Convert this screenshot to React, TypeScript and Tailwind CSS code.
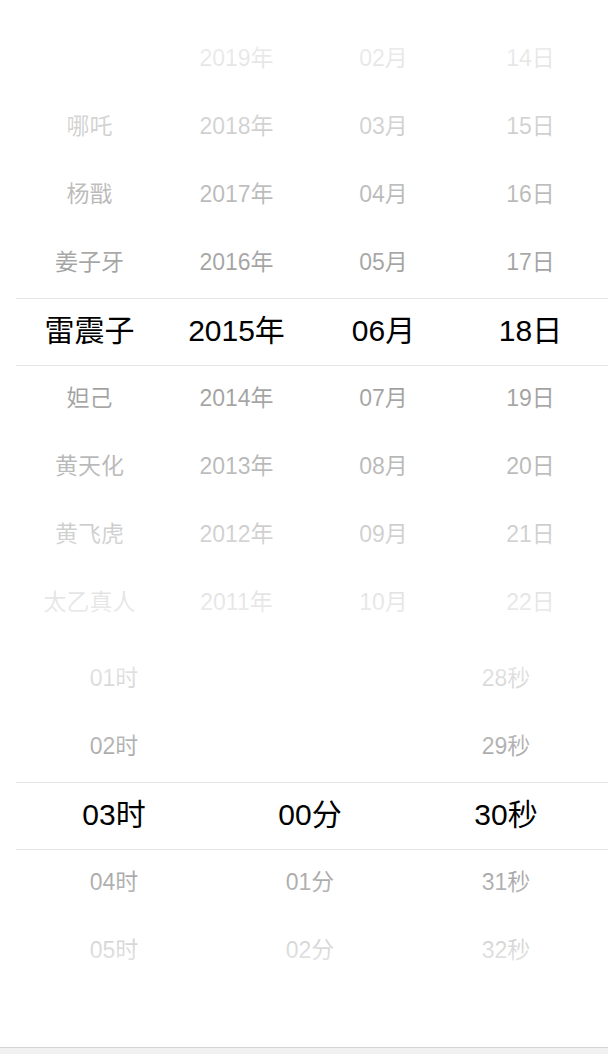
const ROW = 68

const names = ["哪吒", "杨戬", "姜子牙", "雷震子", "妲己", "黄天化", "黄飞虎", "太乙真人", "土行孙"]
const years = Array.from({ length: 30 }, (_, i) => `${2030 - i}年`)
const months = Array.from({ length: 12 }, (_, i) => `${String(i + 1).padStart(2, "0")}月`)
const days = Array.from({ length: 31 }, (_, i) => `${String(i + 1).padStart(2, "0")}日`)
const hours = Array.from({ length: 24 }, (_, i) => `${String(i).padStart(2, "0")}时`)
const minutes = Array.from({ length: 60 }, (_, i) => `${String(i).padStart(2, "0")}分`)
const seconds = Array.from({ length: 60 }, (_, i) => `${String(i).padStart(2, "0")}秒`)

function PickerColumn({
  items,
  value,
  above,
  below,
}: {
  items: string[]
  value: number
  above: number
  below: number
}) {
  const rows = []
  for (let k = -above; k <= below; k++) {
    const item = items[value + k]
    rows.push(
      <div
        key={k}
        className={`flex h-[68px] items-center justify-center whitespace-nowrap pb-1 text-black ${
          k === 0 ? "text-[30px]" : "text-[23px]"
        }`}
      >
        {item ?? ""}
      </div>
    )
  }
  return <div className="flex flex-col">{rows}</div>
}

function PickerView({
  columns,
  above,
  below,
}: {
  columns: { items: string[]; value: number }[]
  above: number
  below: number
}) {
  return (
    <div className="relative ml-4">
      <div
        className="grid pr-1"
        style={{ gridTemplateColumns: `repeat(${columns.length}, minmax(0, 1fr))` }}
      >
        {columns.map((c, i) => (
          <PickerColumn key={i} items={c.items} value={c.value} above={above} below={below} />
        ))}
      </div>
      <div
        className="pointer-events-none absolute inset-x-0 top-0 bg-linear-to-b from-white/95 to-white/60"
        style={{ height: above * ROW }}
      />
      <div
        className="pointer-events-none absolute inset-x-0 bottom-0 bg-linear-to-t from-white/95 to-white/60"
        style={{ height: below * ROW }}
      />
      <div
        className="pointer-events-none absolute inset-x-0 h-[68px] border-y border-[#e5e5e5]"
        style={{ top: above * ROW }}
      />
    </div>
  )
}

export default function App() {
  return (
    <div
      className="flex h-[1054px] w-full flex-col bg-white"
      style={{ fontFamily: '"Liberation Sans", "Noto Sans CJK SC", sans-serif' }}
    >
      <div className="pt-[26px]">
        <PickerView
          above={4}
          below={4}
          columns={[
            { items: names, value: 3 },
            { items: years, value: 15 },
            { items: months, value: 5 },
            { items: days, value: 17 },
          ]}
        />
      </div>
      <div className="pt-2">
        <PickerView
          above={2}
          below={2}
          columns={[
            { items: hours, value: 3 },
            { items: minutes, value: 0 },
            { items: seconds, value: 30 },
          ]}
        />
      </div>
      <div className="flex-1" />
      <div className="h-[7px] border-t border-[#d4d4d4] bg-[#f1f1f1]" />
    </div>
  )
}
